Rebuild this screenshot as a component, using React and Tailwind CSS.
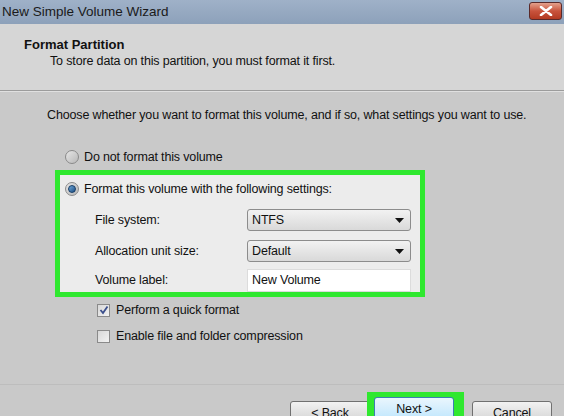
import React from "react";

const font = { fontFamily: '"Liberation Sans", Arial, sans-serif' };
const T = "text-[12.5px] tracking-[-0.15px]";

function Radio({ checked }) {
  return (
    <div className="w-[14px] h-[14px] rounded-full border border-[#8a8a8a] bg-gradient-to-br from-[#e6e6e6] to-[#b8b8b8] flex items-center justify-center shrink-0">
      {checked && (
        <div className="w-[8px] h-[8px] rounded-full bg-gradient-to-br from-[#6fa8d8] to-[#1c4f85] border border-[#163c66]" />
      )}
    </div>
  );
}

function Check({ checked }) {
  return (
    <div className="w-[13px] h-[13px] border border-[#8a8a8a] bg-gradient-to-br from-[#d8d8d8] to-[#f2f2f2] flex items-center justify-center shrink-0">
      {checked && (
        <svg width="10" height="10" viewBox="0 0 10 10">
          <path d="M1.5 5 L4 8 L8.5 1.5" stroke="#3b4f8c" strokeWidth="1.8" fill="none" />
        </svg>
      )}
    </div>
  );
}

function Select({ value }) {
  return (
    <div className="w-[164px] h-[22px] rounded-[3px] border border-[#8c8c8c] bg-gradient-to-b from-[#f2f2f2] to-[#d9d9d9] flex items-center justify-between pl-[4px] pr-[6px]">
      <span className="text-[12.5px] tracking-[-0.15px] text-[#111]">{value}</span>
      <svg width="9" height="5" viewBox="0 0 9 5">
        <path d="M0 0 H9 L4.5 5 Z" fill="#111" />
      </svg>
    </div>
  );
}

function Button({ children, highlight }) {
  return (
    <div
      className={
        "w-[80px] h-[24px] rounded-[3px] border flex items-center justify-center text-[12.5px] tracking-[-0.15px] text-[#111] " +
        (highlight
          ? "border-[#3c7fb1] bg-gradient-to-b from-[#eaf6fd] to-[#bee6fd]"
          : "border-[#707070] bg-gradient-to-b from-[#f2f2f2] to-[#d0d0d0]")
      }
    >
      {children}
    </div>
  );
}

export default function App() {
  return (
    <div className="w-[564px] h-[416px] overflow-hidden bg-[#c9c9c9] flex flex-col text-[#111] whitespace-nowrap" style={font}>
      {/* title bar */}
      <div className="h-[24px] bg-gradient-to-b from-[#9fb1c8] to-[#8da1ba] flex items-center justify-between pl-[2px] pr-[2px] shrink-0">
        <span className="text-[13.5px] text-[#1a1a1a]">New Simple Volume Wizard</span>
        <div className="w-[33px] h-[18px] mb-[2px] rounded-[3px] border border-[#5a2a2a] bg-gradient-to-b from-[#e3a08c] via-[#c8533c] to-[#b33a22] flex items-center justify-center">
          <svg width="14" height="10" viewBox="0 0 14 10">
            <path d="M2 1 L12 9 M12 1 L2 9" stroke="white" strokeWidth="2.6" strokeLinecap="round" />
          </svg>
        </div>
      </div>
      {/* header */}
      <div className="h-[67px] bg-[#d6d6d6] border-b border-[#9c9c9c] shrink-0 pl-[24px] pt-[12px]">
        <div className="text-[13px] font-bold leading-[17px]">Format Partition</div>
        <div className={T + " leading-[17px] pl-[26px]"}>To store data on this partition, you must format it first.</div>
      </div>
      <div className="h-px bg-[#e0e0e0] shrink-0" />
      {/* body */}
      <div className="flex-1 flex flex-col pl-[47px] pt-[14px]">
        <div className={T + " leading-[18px]"}>
          Choose whether you want to format this volume, and if so, what settings you want to use.
        </div>
        <div className="mt-[24px] ml-[18px] flex items-center gap-[5px] h-[18px]">
          <Radio />
          <span className={T}>Do not format this volume</span>
        </div>
        <div className="mt-[4px] ml-[8px] w-[370px] h-[127px] border-[5px] border-[#2fe82f] bg-[#ececec] flex flex-col">
          <div className="mt-[5px] ml-[5px] flex items-center gap-[5px] h-[18px]">
            <Radio checked />
            <span className={T}>Format this volume with the following settings:</span>
          </div>
          <div className="mt-[11px] flex items-center h-[22px]">
            <span className={"ml-[35px] w-[152px] " + T}>File system:</span>
            <Select value="NTFS" />
          </div>
          <div className="mt-[9px] flex items-center h-[22px]">
            <span className={"ml-[35px] w-[152px] " + T}>Allocation unit size:</span>
            <Select value="Default" />
          </div>
          <div className="mt-[7px] flex items-center h-[23px]">
            <span className={"ml-[35px] w-[152px] " + T}>Volume label:</span>
            <div className={"w-[164px] h-[23px] bg-white border border-[#dcdcdc] flex items-center pl-[4px] " + T}>
              New Volume
            </div>
          </div>
        </div>
        <div className="mt-[4px] ml-[50px] flex items-center gap-[6px] h-[18px]">
          <Check checked />
          <span className={T}>Perform a quick format</span>
        </div>
        <div className="mt-[8px] ml-[50px] flex items-center gap-[6px] h-[18px]">
          <Check />
          <span className={T}>Enable file and folder compression</span>
        </div>
      </div>
      {/* footer */}
      <div className="h-[32px] shrink-0 border-t border-[#bdbdbd] flex items-start justify-end pr-[12px]">
        <div className="mt-[16px] flex items-start">
          <Button>&lt; Back</Button>
          <div className="ml-[-3px] mt-[-9px] w-[97px] h-[40px] bg-[#2fe82f] p-[5px] pl-[7px]">
            <Button highlight>Next &gt;</Button>
          </div>
          <div className="ml-[8px]">
            <Button>Cancel</Button>
          </div>
        </div>
      </div>
    </div>
  );
}
